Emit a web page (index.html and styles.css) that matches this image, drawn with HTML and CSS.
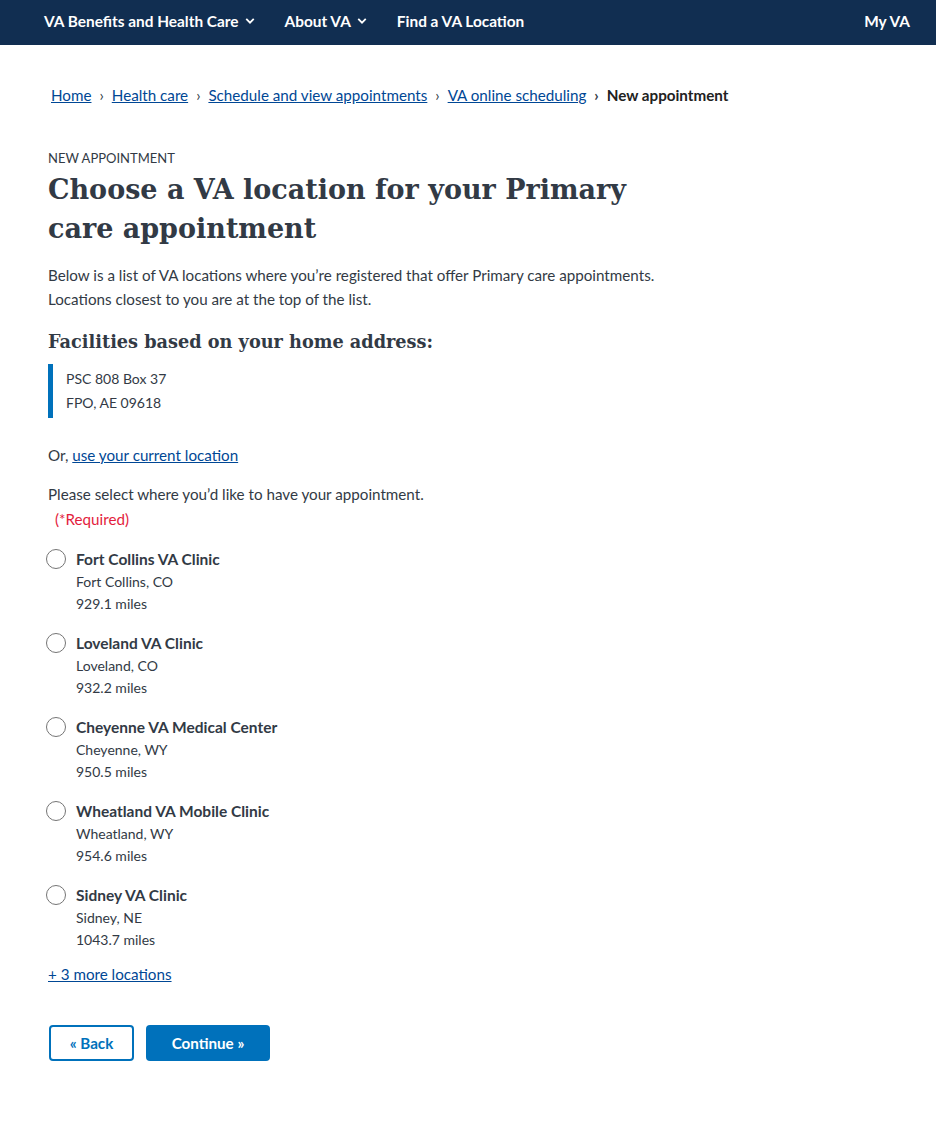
FILE: index.html
```html
<!DOCTYPE html>
<html lang="en">
<head>
<meta charset="utf-8">
<title>Choose a VA location</title>
<link rel="stylesheet" href="styles.css">
</head>
<body>
<header class="topnav">
  <nav class="nav-left">
    <a class="nav-item" href="#">VA Benefits and Health Care <svg class="chev" viewBox="0 0 12 8" width="10" height="8"><path d="M1.5 1.5 L6 6 L10.5 1.5" fill="none" stroke="#fff" stroke-width="2.2"/></svg></a>
    <a class="nav-item" href="#">About VA <svg class="chev" viewBox="0 0 12 8" width="10" height="8"><path d="M1.5 1.5 L6 6 L10.5 1.5" fill="none" stroke="#fff" stroke-width="2.2"/></svg></a>
    <a class="nav-item" href="#">Find a VA Location</a>
  </nav>
  <a class="nav-item myva" href="#">My VA</a>
</header>

<main class="page">
  <ol class="crumbs">
    <li><a href="#">Home</a></li>
    <li><a href="#">Health care</a></li>
    <li><a href="#">Schedule and view appointments</a></li>
    <li><a href="#">VA online scheduling</a></li>
    <li class="current">New appointment</li>
  </ol>

  <div class="eyebrow">NEW APPOINTMENT</div>
  <h1 class="title">Choose a VA location for your Primary care appointment</h1>
  <p class="intro">Below is a list of VA locations where you’re registered that offer Primary care appointments. Locations closest to you are at the top of the list.</p>

  <h2 class="subtitle">Facilities based on your home address:</h2>
  <div class="address">
    <div>PSC 808 Box 37</div>
    <div>FPO, AE 09618</div>
  </div>

  <p class="alt">Or, <a href="#">use your current location</a></p>

  <fieldset class="choices">
    <legend class="legend">Please select where you’d like to have your appointment.<span class="req">(*Required)</span></legend>
    <label class="choice"><span class="radio"></span><span class="info"><strong>Fort Collins VA Clinic</strong><span>Fort Collins, CO</span><span>929.1 miles</span></span></label>
    <label class="choice"><span class="radio"></span><span class="info"><strong>Loveland VA Clinic</strong><span>Loveland, CO</span><span>932.2 miles</span></span></label>
    <label class="choice"><span class="radio"></span><span class="info"><strong>Cheyenne VA Medical Center</strong><span>Cheyenne, WY</span><span>950.5 miles</span></span></label>
    <label class="choice"><span class="radio"></span><span class="info"><strong>Wheatland VA Mobile Clinic</strong><span>Wheatland, WY</span><span>954.6 miles</span></span></label>
    <label class="choice"><span class="radio"></span><span class="info"><strong>Sidney VA Clinic</strong><span>Sidney, NE</span><span>1043.7 miles</span></span></label>
  </fieldset>

  <a class="more" href="#">+ 3 more locations</a>

  <div class="actions">
    <button class="btn btn-outline">« Back</button>
    <button class="btn btn-primary">Continue »</button>
  </div>
</main>
</body>
</html>
```

FILE: styles.css
```css
* { box-sizing: border-box; }
body {
  margin: 0;
  font-family: "Lato", "Noto Sans", sans-serif;
  font-size: 15.2px;
  color: #323a45;
  background: #fff;
}
a { color: #004795; }

.topnav {
  height: 45px;
  background: #112e51;
  display: flex;
  align-items: center;
  justify-content: space-between;
  padding: 0 26px 4px 44px;
}
.nav-left { display: flex; align-items: center; gap: 30px; }
.nav-item {
  color: #fff;
  text-decoration: none;
  font-weight: 700;
  font-size: 15.4px;
  display: flex;
  align-items: center;
  gap: 6px;
}
.chev { display: block; }

.page { padding: 0 48px; }

.crumbs {
  list-style: none;
  margin: 0;
  padding: 40px 0 0 3px;
  display: flex;
  font-size: 15.2px;
  line-height: 20px;
}
.crumbs li { display: flex; align-items: center; }
.crumbs li + li::before {
  content: "›";
  color: #323a45;
  margin: 0 8px;
}
.crumbs .current { font-weight: 700; color: #212121; }

.eyebrow {
  margin-top: 45px;
  font-size: 13px;
  line-height: 16px;
}
.title {
  margin: 4px 0 0;
  font-family: "DejaVu Serif", serif;
  font-weight: 700;
  font-size: 27px;
  line-height: 39px;
  max-width: 600px;
  color: #323a45;
}
.intro {
  margin: 15px 0 0;
  line-height: 24px;
  max-width: 640px;
}
.subtitle {
  margin: 17px 0 0;
  font-family: "DejaVu Serif", serif;
  font-weight: 700;
  font-size: 17.7px;
  line-height: 28px;
}
.address {
  margin-top: 8px;
  border-left: 5px solid #0071bb;
  padding: 3px 0 3px 13px;
  line-height: 24px;
  font-size: 14px;
}
.alt { margin: 25px 0 0; line-height: 24px; }

.choices { border: 0; margin: 15px 0 0; padding: 0; }
.legend { padding: 0; line-height: 24px; }
.req { display: block; color: #e31c3d; padding-left: 7px; font-size: 15.2px; line-height: 24px; margin-top: 1px; }

.choice {
  display: flex;
  gap: 10px;
  margin-top: 17px;
  margin-left: -2px;
}
.choice + .choice { margin-top: 17px; }
.radio {
  width: 20px;
  height: 20px;
  border-radius: 50%;
  border: 1px solid #757575;
  flex: none;
  margin-top: 1px;
}
.info { display: flex; flex-direction: column; line-height: 22px; font-size: 14px; }
.info strong { font-size: 15.5px; line-height: 23px; color: #323a45; }

.more { display: inline-block; margin-top: 12px; font-size: 15.2px; line-height: 22px; }

.actions { display: flex; gap: 12px; margin-top: 40px; padding-left: 1px; }
.btn {
  height: 36px;
  border-radius: 4px;
  font-family: "Lato", "Noto Sans", sans-serif;
  font-weight: 700;
  font-size: 15.2px;
  padding: 0 18px;
  cursor: pointer;
}
.btn-outline { background: #fff; color: #0071bb; border: 2px solid #0071bb; width: 85px; }
.btn-primary { background: #0071bb; color: #fff; border: 0; width: 124px; }
```
